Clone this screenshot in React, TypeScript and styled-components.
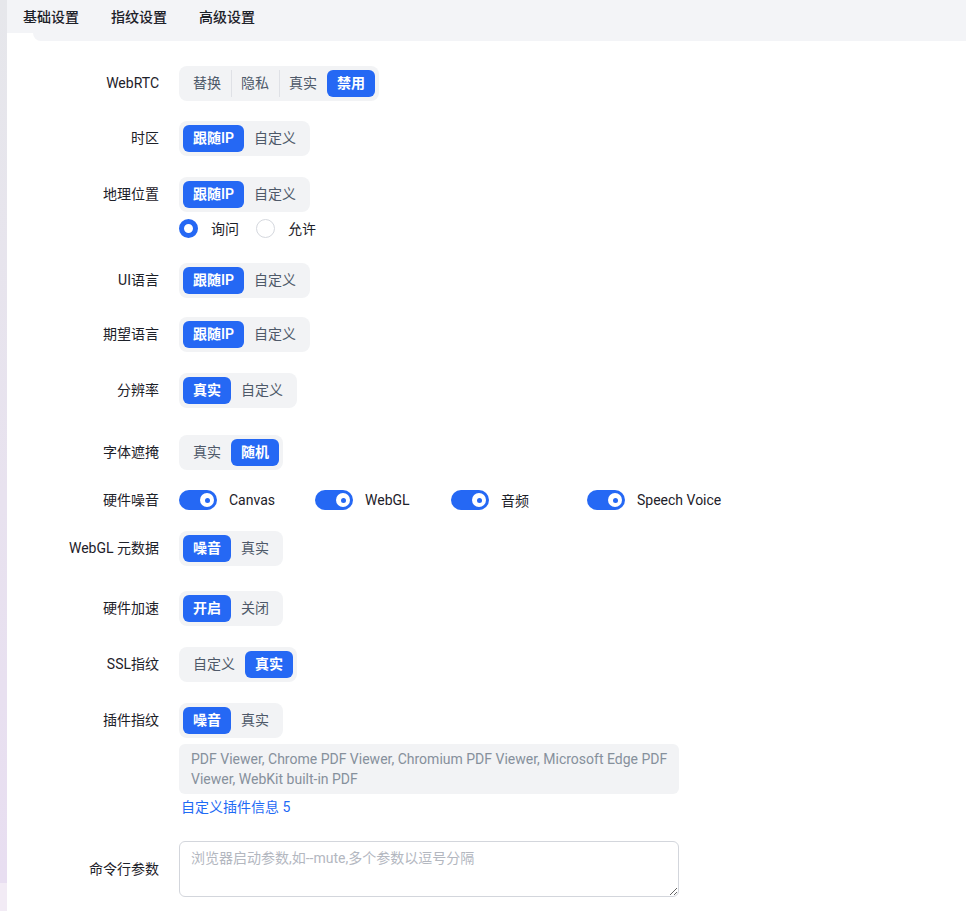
import { FC, ReactElement } from 'react';
import styled, { createGlobalStyle } from 'styled-components';

const BLUE = '#2568f4';
const FONT = "Roboto, 'Noto Sans CJK SC', sans-serif";

const GlobalStyle = createGlobalStyle`
  html, body {
    margin: 0;
    padding: 0;
  }
  body {
    font-family: ${FONT};
    font-size: 14px;
    color: #1d2129;
    background: #fff;
  }
  * {
    box-sizing: border-box;
  }
`;

const Page = styled.div`
  display: flex;
  min-height: 100vh;
`;

// thin sidebar edge on the left
const SideEdge = styled.div`
  width: 7px;
  flex-shrink: 0;
  background: linear-gradient(180deg, #e6e7eb 0, #e8e2ef 500px, #e8def1 883px, #f2ebf5 883px);
`;

const Main = styled.div`
  flex: 1;
  display: flex;
  flex-direction: column;
  min-width: 0;
`;

const TabBar = styled.nav`
  position: relative;
  height: 41px;
  display: flex;
  align-items: flex-start;
  gap: 32px;
  padding: 8px 0 0 16px;
  background: #f3f4f7;

  /* inverted corner under the active tab */
  &::after {
    content: '';
    position: absolute;
    left: 0;
    bottom: 0;
    width: 34px;
    height: 8px;
    background: #fff;
  }
  &::before {
    content: '';
    position: absolute;
    left: 26px;
    bottom: 0;
    width: 10px;
    height: 8px;
    background: #f3f4f7;
    border-bottom-left-radius: 8px;
    z-index: 1;
  }
`;

const Tab = styled.span`
  font-size: 14px;
  line-height: 18px;
  font-weight: 500;
  color: #1d2129;
  cursor: pointer;
`;

const Panel = styled.main`
  flex: 1;
  background: #fff;
  padding-top: 25px;
`;

interface RowProps {
  $gap: number;
}
const Row = styled.div<RowProps>`
  display: grid;
  grid-template-columns: 152px 500px;
  column-gap: 20px;
  margin-bottom: ${(p: RowProps) => p.$gap}px;
`;

interface LabelProps {
  $line?: number;
  $center?: boolean;
}
const Label = styled.label<LabelProps>`
  text-align: right;
  font-size: 14px;
  color: #1d2129;
  line-height: ${(p: LabelProps) => p.$line || 35}px;
  white-space: nowrap;
  align-self: ${(p: LabelProps) => (p.$center ? 'center' : 'start')};
`;

const Control = styled.div`
  display: flex;
  flex-direction: column;
  align-items: flex-start;
`;

const Segmented = styled.div`
  display: inline-flex;
  padding: 4px;
  background: #f2f3f5;
  border-radius: 8px;
`;

interface OptionProps {
  $active: boolean;
  $divider: boolean;
}
const Option = styled.span<OptionProps>`
  position: relative;
  height: 27px;
  line-height: 27px;
  padding: 0 10px;
  border-radius: 6px;
  font-size: 14px;
  white-space: nowrap;
  cursor: pointer;
  color: ${(p: OptionProps) => (p.$active ? '#fff' : '#4e5969')};
  font-weight: ${(p: OptionProps) => (p.$active ? 600 : 400)};
  background: ${(p: OptionProps) => (p.$active ? BLUE : 'transparent')};

  &::before {
    content: '';
    display: ${(p: OptionProps) => (p.$divider ? 'block' : 'none')};
    position: absolute;
    left: 0;
    top: 0;
    bottom: 0;
    width: 1px;
    background: #dfe1e6;
  }
`;

const RadioGroup = styled.div`
  display: flex;
  align-items: center;
  height: 22px;
  margin-top: 5px;
`;

const RadioItem = styled.span`
  display: inline-flex;
  align-items: center;
  gap: 13px;
  margin-right: 17px;
  font-size: 14px;
  color: #1d2129;
`;

interface RadioDotProps {
  $checked: boolean;
}
const RadioDot = styled.span<RadioDotProps>`
  width: 19px;
  height: 19px;
  border-radius: 50%;
  background: #fff;
  border: ${(p: RadioDotProps) => (p.$checked ? `5px solid ${BLUE}` : '1px solid #d5d8de')};
`;

const SwitchGrid = styled.div`
  display: grid;
  grid-template-columns: repeat(4, 136px);
  height: 20px;
`;

const SwitchItem = styled.span`
  display: flex;
  align-items: center;
  gap: 12px;
  font-size: 14px;
  color: #1d2129;
  white-space: nowrap;
`;

const SwitchTrack = styled.span`
  position: relative;
  width: 38px;
  height: 20px;
  border-radius: 10px;
  background: ${BLUE};
  display: flex;
  align-items: center;
  justify-content: flex-end;
  padding-right: 3px;
`;

const SwitchKnob = styled.span`
  width: 14px;
  height: 14px;
  border-radius: 50%;
  background: #fff;
  display: flex;
  align-items: center;
  justify-content: center;

  &::after {
    content: '';
    width: 5px;
    height: 5px;
    border-radius: 50%;
    background: ${BLUE};
  }
`;

const PluginBox = styled.div`
  width: 500px;
  margin-top: 6px;
  padding: 5px 6px 5px 12px;
  background: #f2f3f5;
  border-radius: 6px;
  font-size: 14px;
  line-height: 20px;
  color: #86909c;
`;

const LinkText = styled.a`
  margin-top: 3px;
  margin-left: 2px;
  font-size: 14px;
  line-height: 20px;
  color: #1f6bf5;
  text-decoration: none;
  cursor: pointer;
`;

const TextArea = styled.textarea`
  width: 500px;
  height: 56px;
  padding: 5px 11px;
  border: 1px solid #d3d6dc;
  border-radius: 6px;
  font-family: ${FONT};
  font-size: 14px;
  line-height: 22px;
  color: #1d2129;
  resize: vertical;
  outline: none;

  &::placeholder {
    color: #b3b7bf;
  }
`;

interface SegProps {
  options: string[];
  active: number;
}
const Seg: FC<SegProps> = ({ options, active }): ReactElement => (
  <Segmented>
    {options.map((o, i) => (
      <Option
        key={o}
        $active={i === active}
        $divider={i > 0 && i !== active && i - 1 !== active}
      >
        {o}
      </Option>
    ))}
  </Segmented>
);

const segRows: { label: string; options: string[]; active: number; gap: number }[] = [
  { label: 'UI语言', options: ['跟随IP', '自定义'], active: 0, gap: 19 },
  { label: '期望语言', options: ['跟随IP', '自定义'], active: 0, gap: 21 },
  { label: '分辨率', options: ['真实', '自定义'], active: 0, gap: 27 },
  { label: '字体遮掩', options: ['真实', '随机'], active: 1, gap: 20 },
];

const lowerRows: { label: string; options: string[]; active: number; gap: number }[] = [
  { label: 'WebGL 元数据', options: ['噪音', '真实'], active: 0, gap: 25 },
  { label: '硬件加速', options: ['开启', '关闭'], active: 0, gap: 21 },
  { label: 'SSL指纹', options: ['自定义', '真实'], active: 1, gap: 21 },
];

const App: FC = (): ReactElement => {
  return (
    <>
      <GlobalStyle />
      <Page>
        <SideEdge />
        <Main>
          <TabBar>
            <Tab>基础设置</Tab>
            <Tab>指纹设置</Tab>
            <Tab>高级设置</Tab>
          </TabBar>

          <Panel>
            <Row $gap={20}>
              <Label>WebRTC</Label>
              <Control>
                <Seg options={['替换', '隐私', '真实', '禁用']} active={3} />
              </Control>
            </Row>

            <Row $gap={21}>
              <Label>时区</Label>
              <Control>
                <Seg options={['跟随IP', '自定义']} active={0} />
              </Control>
            </Row>

            <Row $gap={24}>
              <Label>地理位置</Label>
              <Control>
                <Seg options={['跟随IP', '自定义']} active={0} />
                <RadioGroup>
                  <RadioItem>
                    <RadioDot $checked />
                    询问
                  </RadioItem>
                  <RadioItem>
                    <RadioDot $checked={false} />
                    允许
                  </RadioItem>
                </RadioGroup>
              </Control>
            </Row>

            {segRows.map((r) => (
              <Row $gap={r.gap} key={r.label}>
                <Label>{r.label}</Label>
                <Control>
                  <Seg options={r.options} active={r.active} />
                </Control>
              </Row>
            ))}

            <Row $gap={21}>
              <Label $line={20}>硬件噪音</Label>
              <SwitchGrid>
                {['Canvas', 'WebGL', '音频', 'Speech Voice'].map((s) => (
                  <SwitchItem key={s}>
                    <SwitchTrack>
                      <SwitchKnob />
                    </SwitchTrack>
                    {s}
                  </SwitchItem>
                ))}
              </SwitchGrid>
            </Row>

            {lowerRows.map((r) => (
              <Row $gap={r.gap} key={r.label}>
                <Label>{r.label}</Label>
                <Control>
                  <Seg options={r.options} active={r.active} />
                </Control>
              </Row>
            ))}

            <Row $gap={24}>
              <Label>插件指纹</Label>
              <Control>
                <Seg options={['噪音', '真实']} active={0} />
                <PluginBox>
                  PDF Viewer, Chrome PDF Viewer, Chromium PDF Viewer, Microsoft Edge PDF
                  Viewer, WebKit built-in PDF
                </PluginBox>
                <LinkText>自定义插件信息 5</LinkText>
              </Control>
            </Row>

            <Row $gap={14}>
              <Label $center>命令行参数</Label>
              <TextArea placeholder="浏览器启动参数,如--mute,多个参数以逗号分隔" />
            </Row>
          </Panel>
        </Main>
      </Page>
    </>
  );
};

export default App;
